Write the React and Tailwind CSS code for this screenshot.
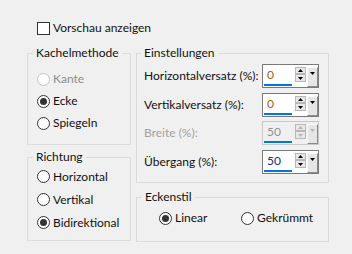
import React from "react";

function Radio({ label, checked, disabled }) {
  return (
    <div className="flex items-center h-full whitespace-nowrap">
      <span
        className={`w-[13px] h-[13px] shrink-0 rounded-full border bg-white flex items-center justify-center ${
          disabled ? "border-[#c4c4c4]" : "border-[#333333]"
        }`}
      >
        {checked && <span className="w-[7px] h-[7px] rounded-full bg-[#333333]" />}
      </span>
      <span className={`ml-[3px] ${disabled ? "text-[#8d8d8d]" : "text-[#111]"}`}>{label}</span>
    </div>
  );
}

function Spinner({ value, disabled, valueColor }) {
  const tri = disabled ? "#b5b5b5" : "#000";
  return (
    <div
      className={`w-[57px] h-[24px] shrink-0 border flex ${
        disabled ? "border-[#c8c8c8] bg-[#f0f0f0]" : "border-[#7a7a7a] bg-white"
      }`}
    >
      <div className="w-[30px] pl-[1px] flex flex-col">
        <div
          className="h-[19px] pl-[3px] leading-[19px] text-[12px]"
          style={{ color: disabled ? "#909090" : valueColor }}
        >
          {value}
        </div>
        <div className="h-[2px] w-[28px] bg-[#0078d7]" />
      </div>
      <div className="ml-[2px] mt-[2px] flex flex-col">
        <div className="w-[11px] h-[7px] border border-[#b8b8b8] bg-[#e8e8e8] flex items-center justify-center">
          <svg width="5" height="3" viewBox="0 0 5 3">
            <path d="M2.5 0 L5 3 L0 3 Z" fill={tri} />
          </svg>
        </div>
        <div className="w-[11px] h-[8px] border border-[#b8b8b8] bg-[#e8e8e8] flex items-center justify-center">
          <svg width="5" height="3" viewBox="0 0 5 3">
            <path d="M0 0 L5 0 L2.5 3 Z" fill={tri} />
          </svg>
        </div>
      </div>
      <div className="ml-[1px] mt-[2px] w-[11px] h-[20px] bg-[#e6e6e6] border-r border-b border-[#8a8a8a] border-t border-t-[#f8f8f8] border-l border-l-[#f8f8f8] flex justify-center pt-[4px]">
        <svg width="5" height="3" viewBox="0 0 5 3">
          <path d="M0 0 L5 0 L2.5 3 Z" fill={tri} />
        </svg>
      </div>
    </div>
  );
}

function Group({ title, className, legendClass, bodyClass, children }) {
  return (
    <fieldset className={`min-w-0 border border-[#dcdcdc] ${className}`}>
      <legend className={`px-[3px] leading-[16px] text-[#111] ${legendClass}`}>{title}</legend>
      <div className={bodyClass}>{children}</div>
    </fieldset>
  );
}

function Row({ label, disabled, value, valueColor, className }) {
  return (
    <div className={`flex items-center justify-between whitespace-nowrap ${className}`}>
      <span className={disabled ? "text-[#a2a2a2]" : "text-[#111]"}>{label}</span>
      <Spinner value={value} disabled={disabled} valueColor={valueColor} />
    </div>
  );
}

export default function App() {
  return (
    <div className="w-[352px] h-[254px] bg-[#f0f0f0] font-['Segoe_UI','Lato',sans-serif] text-[12px] leading-[16px] pl-[27px] pt-[20px]">
      <div className="flex items-center h-[16px] ml-[10px]">
        <span className="w-[13px] h-[13px] border border-[#333333] bg-white" />
        <span className="ml-[3px] text-[#111]">Vorschau anzeigen</span>
      </div>

      <div className="flex mt-[9px]">
        <div className="w-[104px] flex flex-col">
          <Group title="Kachelmethode" legendClass="ml-[5px]" bodyClass="pl-[9px] pt-[7px] pb-[10px]">
            <div className="h-[22px]">
              <Radio label="Kante" disabled />
            </div>
            <div className="h-[22px]">
              <Radio label="Ecke" checked />
            </div>
            <div className="h-[22px]">
              <Radio label="Spiegeln" />
            </div>
          </Group>
          <Group title="Richtung" legendClass="ml-[5px]" className="mt-[4px]" bodyClass="pl-[9px] pb-[6px]">
            <div className="h-[23px]">
              <Radio label="Horizontal" />
            </div>
            <div className="h-[23px]">
              <Radio label="Vertikal" />
            </div>
            <div className="h-[23px]">
              <Radio label="Bidirektional" checked />
            </div>
          </Group>
        </div>

        <div className="w-[193px] ml-[5px] flex flex-col">
          <Group title="Einstellungen" legendClass="ml-[4px]" bodyClass="pl-[7px] pr-[9px] pt-[3px] pb-[8px]">
            <Row label="Horizontalversatz (%):" value="0" valueColor="#a8600f" />
            <Row label="Vertikalversatz (%):" value="0" valueColor="#a8600f" className="mt-[5px]" />
            <Row label="Breite (%):" value="50" disabled className="mt-[4px]" />
            <Row label="Übergang (%):" value="50" valueColor="#15306e" className="mt-[5px]" />
          </Group>
          <Group title="Eckenstil" legendClass="ml-[5px]" className="mt-[6px]" bodyClass="pl-[22px] pt-[2px] pb-[12px]">
            <div className="flex h-[22px]">
              <div className="w-[82px]">
                <Radio label="Linear" checked />
              </div>
              <Radio label="Gekrümmt" />
            </div>
          </Group>
        </div>
      </div>
    </div>
  );
}
